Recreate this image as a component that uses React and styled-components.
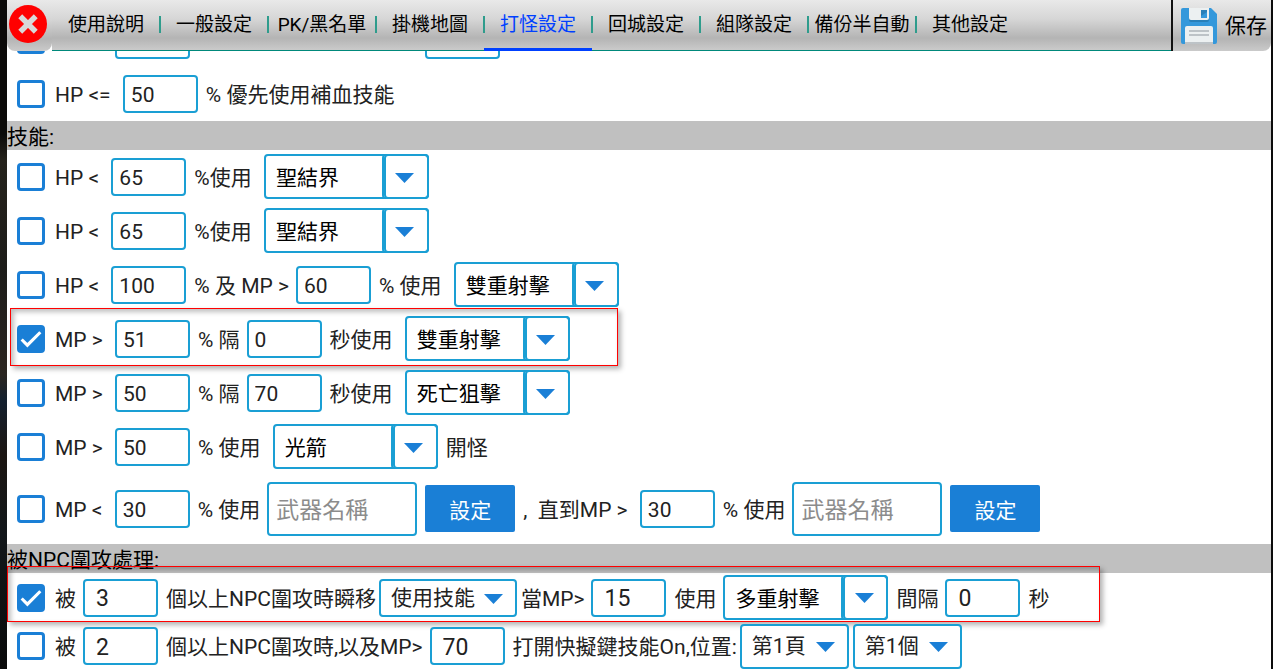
import React, { useId } from "react";
import styled, { createGlobalStyle } from "styled-components";

const Colors = {
  border: "#1a9fd4",
  primary: "#1a7fd6",
  text: "#222222",
  teal: "#00897b",
  tealSoft: "#2f9c8c",
  active: "#0040ff",
  section: "#c0c0c0",
};

const bar = "linear-gradient(#e9e9e9, #d6d6d6 38%, #b4b4b4 76%, #cacaca)";

const tabs = [
  "使用說明",
  "一般設定",
  "PK/黑名單",
  "掛機地圖",
  "打怪設定",
  "回城設定",
  "組隊設定",
  "備份半自動",
  "其他設定",
];

const ArrowIcon = () => (
  <svg width="19" height="10" viewBox="0 0 19 10" aria-hidden="true">
    <path d="M0 0h19L9.500 10z" fill={Colors.primary} />
  </svg>
);

const CloseIcon = () => (
  <svg width="38" height="38" viewBox="0 0 38 38" aria-hidden="true">
    <circle cx="19" cy="19" r="19" fill="#ff0000" />
    <path
      d="M13.200 13.200l11.600 11.600M24.800 13.200l-11.600 11.600"
      stroke="#d8d8d8"
      strokeWidth="5.500"
      strokeLinecap="square"
    />
  </svg>
);

const SaveIcon = () => (
  <svg width="36" height="36" viewBox="0 0 36 36" aria-hidden="true">
    <path d="M2 0h28l6 6v28a2 2 0 0 1-2 2H2a2 2 0 0 1-2-2V2a2 2 0 0 1 2-2z" fill="#3498db" />
    <path d="M8 0h20v12a2 2 0 0 1-2 2H10a2 2 0 0 1-2-2z" fill="#2980b9" />
    <path d="M8 0h20v10a2 2 0 0 1-2 2H10a2 2 0 0 1-2-2z" fill="#ecf0f1" />
    <path d="M20 2h6v8h-6z" fill="#3498db" />
    <path d="M20 2h6v2l-6 4z" fill="#2980b9" />
    <path d="M6 18h24a2 2 0 0 1 2 2v16H4V20a2 2 0 0 1 2-2z" fill="#ecf0f1" />
    <path d="M4 34h28v2H4zM8 22h20v2H8zM8 26h20v2H8z" fill="#bdc3c7" />
  </svg>
);

const Check = ({ label, checked }) => {
  const id = useId();
  return (
    <>
      <S.Check>
        <input type="checkbox" id={id} defaultChecked={checked} aria-label={label ? undefined : "啟用"} />
        <svg width="27" height="27" viewBox="0 0 27 27" aria-hidden="true">
          <path d="M4.500 14l5.500 5.500L22.500 7" fill="none" stroke="#fff" strokeWidth="3" />
        </svg>
      </S.Check>
      {label && (
        <S.Text as="label" htmlFor={id}>
          {label}
        </S.Text>
      )}
    </>
  );
};

const Num = ({ value, label, large }) => (
  <S.Num type="text" inputMode="numeric" defaultValue={value} aria-label={label} $large={large} />
);

const Combo = ({ value }) => (
  <S.Combo>
    <select defaultValue={value} aria-label="技能">
      <option>{value}</option>
    </select>
    <span>
      <ArrowIcon />
    </span>
  </S.Combo>
);

const Pick = ({ value, label, width, tall }) => (
  <S.Pick $width={width} $tall={tall}>
    <select defaultValue={value} aria-label={label}>
      <option>{value}</option>
    </select>
    <ArrowIcon />
  </S.Pick>
);

const Weapon = () => (
  <>
    <S.Weapon type="text" placeholder="武器名稱" aria-label="武器名稱" />
    <S.Set type="button">設定</S.Set>
  </>
);

const App = () => (
  <>
    <GlobalStyle />
    <S.Page>
      <S.Header>
        <S.Close type="button" aria-label="關閉">
          <CloseIcon />
        </S.Close>
        <S.Tabs>
          {tabs.map((tab) => (
            <S.Tab key={tab} type="button" $active={tab === "打怪設定"}>
              {tab}
            </S.Tab>
          ))}
        </S.Tabs>
        <S.Save type="button">
          <SaveIcon />
          <span>保存</span>
        </S.Save>
      </S.Header>

      <S.Body>
        <S.Row $scrolled>
          <Check />
          <S.Space $width={68} />
          <Num value="" label="HP" />
          <S.Space $width={235} />
          <Num value="" label="MP" />
        </S.Row>
        <S.Row>
          <Check label="HP <= " />
          <Num value="50" label="HP" />
          <S.Text>% 優先使用補血技能</S.Text>
        </S.Row>

        <S.Section>技能:</S.Section>
        <S.Row>
          <Check label="HP < " />
          <Num value="65" label="HP" />
          <S.Text>{"%使用 "}</S.Text>
          <Combo value="聖結界" />
        </S.Row>
        <S.Row>
          <Check label="HP < " />
          <Num value="65" label="HP" />
          <S.Text>{"%使用 "}</S.Text>
          <Combo value="聖結界" />
        </S.Row>
        <S.Row>
          <Check label="HP < " />
          <Num value="100" label="HP" />
          <S.Text>{"% 及 MP >"}</S.Text>
          <Num value="60" label="MP" />
          <S.Text>{"% 使用 "}</S.Text>
          <Combo value="雙重射擊" />
        </S.Row>
        <S.Row>
          <Check label="MP > " checked />
          <Num value="51" label="MP" />
          <S.Text>% 隔</S.Text>
          <Num value="0" label="秒" />
          <S.Text>{"秒使用 "}</S.Text>
          <Combo value="雙重射擊" />
          <S.Mark $left={3} $width={608} $top={-4} />
        </S.Row>
        <S.Row>
          <Check label="MP > " />
          <Num value="50" label="MP" />
          <S.Text>% 隔</S.Text>
          <Num value="70" label="秒" />
          <S.Text>{"秒使用 "}</S.Text>
          <Combo value="死亡狙擊" />
        </S.Row>
        <S.Row>
          <Check label="MP > " />
          <Num value="50" label="MP" />
          <S.Text>{"% 使用 "}</S.Text>
          <Combo value="光箭" />
          <S.Text>開怪</S.Text>
        </S.Row>
        <S.Row $height={70}>
          <Check label="MP < " />
          <Num value="30" label="MP" />
          <S.Text>% 使用</S.Text>
          <Weapon />
          <S.Text>{",  直到MP > "}</S.Text>
          <Num value="30" label="MP" />
          <S.Text>% 使用</S.Text>
          <Weapon />
        </S.Row>

        <S.Section>被NPC圍攻處理:</S.Section>
        <S.Row $height={49}>
          <Check label="被" checked />
          <Num value="3" label="NPC" large />
          <S.Text $tight="right">個以上NPC圍攻時瞬移</S.Text>
          <Pick value="使用技能" label="瞬移方式" width={138} />
          <S.Text $tight="left">{"當MP>"}</S.Text>
          <Num value="15" label="MP" large />
          <S.Text>使用</S.Text>
          <Combo value="多重射擊" />
          <S.Text>間隔</S.Text>
          <Num value="0" label="秒" large />
          <S.Text>秒</S.Text>
          <S.Mark $left={0} $width={1093} $top={-7} />
        </S.Row>
        <S.Row $height={48}>
          <Check label="被" />
          <Num value="2" label="NPC" large />
          <S.Text>{"個以上NPC圍攻時,以及MP>"}</S.Text>
          <Num value="70" label="MP" large />
          <S.Text $tight="right">打開快擬鍵技能On,位置:</S.Text>
          <Pick value="第1頁" label="頁" width={109} tall />
          <S.Space $width={4} />
          <Pick value="第1個" label="個" width={109} tall />
        </S.Row>
      </S.Body>
    </S.Page>
  </>
);

export default App;

const GlobalStyle = createGlobalStyle`
  * {
    box-sizing: border-box;
  }
  body {
    margin: 0;
    background: linear-gradient(#0b0a09 20%, #26231c 24%, #1d1c19 40%, #2a2520 56%, #14202e 60%, #1c1612 68%, #12171a 80%, #0a0a0a);
  }
  body, button, input, select {
    font-family: Roboto, "Noto Sans CJK TC", sans-serif;
    font-size: 21px;
    color: ${Colors.text};
  }
  input, select {
    appearance: none;
    margin: 0;
    outline: none;
    border: 2px solid ${Colors.border};
    border-radius: 4px;
    background: #fff;
  }
  button {
    border: 0;
    padding: 0;
    cursor: pointer;
  }
`;

const S = {
  Page: styled.div`
    display: flex;
    flex-direction: column;
    height: 100vh;
    overflow: hidden;
    margin-left: 7px;
    border-right: 2px solid #0c0c0c;
    background: #fff;
  `,
  Header: styled.header`
    display: flex;
    flex: none;
    height: 51px;
  `,
  Close: styled.button`
    display: flex;
    align-items: center;
    justify-content: center;
    width: 45px;
    padding-right: 3px;
    padding-bottom: 3px;
    border-radius: 0 0 8px 8px;
    background: ${bar};
  `,
  Tabs: styled.nav`
    display: flex;
    flex: 1;
    background: ${bar};
    border-bottom: 1px solid ${Colors.teal};
  `,
  Tab: styled.button`
    position: relative;
    width: 108px;
    height: 51px;
    padding-bottom: 6px;
    background: none;
    font-size: 19px;
    white-space: nowrap;
    color: ${({ $active }) => ($active ? Colors.active : "#000")};
    box-shadow: ${({ $active }) => ($active ? `inset 0 -3px ${Colors.active}` : "none")};
    &:not(:last-child):after {
      content: "";
      position: absolute;
      top: 16px;
      right: -1px;
      width: 2px;
      height: 17px;
      background: ${Colors.tealSoft};
    }
  `,
  Save: styled.button`
    display: flex;
    align-items: center;
    gap: 8px;
    padding: 0 4px 0 8px;
    border-left: 2px solid #111;
    border-radius: 0 0 8px 0;
    background: ${bar};
    color: #000;
    span {
      padding-bottom: 4px;
    }
  `,
  Body: styled.main`
    flex: 1;
    min-height: 0;
    overflow: hidden;
  `,
  Section: styled.h2`
    margin: 0;
    height: 29px;
    line-height: 32px;
    font-size: 21px;
    font-weight: 400;
    color: #000;
    background: ${Colors.section};
  `,
  Row: styled.div`
    position: relative;
    display: flex;
    align-items: center;
    height: ${({ $height }) => $height || 54}px;
    margin-top: ${({ $scrolled }) => ($scrolled ? -38 : 0)}px;
    padding-left: 10px;
  `,
  Space: styled.span`
    flex: none;
    width: ${({ $width }) => $width}px;
  `,
  Text: styled.span`
    margin-left: ${({ $tight }) => ($tight === "left" ? 4 : 8)}px;
    margin-right: ${({ $tight }) => ($tight === "right" ? 3 : 7)}px;
    padding-top: 2px;
    line-height: 28px;
    white-space: pre;
  `,
  Check: styled.span`
    display: grid;
    flex: none;
    width: 28px;
    height: 28px;
    margin-right: 2px;
    input,
    svg {
      grid-area: 1 / 1;
      width: 28px;
      height: 28px;
    }
    input {
      border: 3px solid ${Colors.primary};
    }
    input:checked {
      background: ${Colors.primary};
    }
    svg {
      pointer-events: none;
    }
  `,
  Num: styled.input`
    flex: none;
    width: 75px;
    height: 38px;
    padding: 2px ${({ $large }) => ($large ? 11 : 6)}px 0;
    font-size: ${({ $large }) => ($large ? 23 : 21)}px;
  `,
  Combo: styled.span`
    display: grid;
    flex: none;
    width: 165px;
    height: 45px;
    margin-bottom: 1px;
    select,
    span {
      grid-area: 1 / 1;
    }
    select {
      padding: 3px 10px 0;
      color: #000;
    }
    span {
      display: flex;
      align-items: center;
      justify-content: center;
      justify-self: end;
      width: 45px;
      padding-right: 3px;
      padding-top: 2px;
      border: 2px solid ${Colors.border};
      border-radius: 4px;
      box-shadow: -2px 0 ${Colors.border};
      pointer-events: none;
    }
  `,
  Pick: styled.span`
    display: grid;
    flex: none;
    align-items: center;
    width: ${({ $width }) => $width}px;
    height: ${({ $tall }) => ($tall ? 45 : 38)}px;
    select,
    svg {
      grid-area: 1 / 1;
    }
    select {
      height: 100%;
      padding: 0 10px;
    }
    svg {
      justify-self: end;
      margin-top: 2px;
      margin-right: 14px;
      pointer-events: none;
    }
  `,
  Weapon: styled.input`
    flex: none;
    width: 150px;
    height: 54px;
    padding: 2px 7px 0;
    font-size: 23px;
    &::placeholder {
      color: #8c8c8c;
    }
  `,
  Set: styled.button`
    flex: none;
    width: 90px;
    height: 47px;
    margin-left: 8px;
    margin-bottom: 1px;
    border-radius: 2px;
    background: ${Colors.primary};
    color: #fff;
  `,
  Mark: styled.span`
    position: absolute;
    top: ${({ $top }) => $top}px;
    bottom: 0;
    left: ${({ $left }) => $left}px;
    width: ${({ $width }) => $width}px;
    border: 1px solid #ff0000;
    box-shadow: 3px 3px 5px rgba(0, 0, 0, 0.3), inset 3px 3px 5px rgba(0, 0, 0, 0.25);
    pointer-events: none;
  `,
};
